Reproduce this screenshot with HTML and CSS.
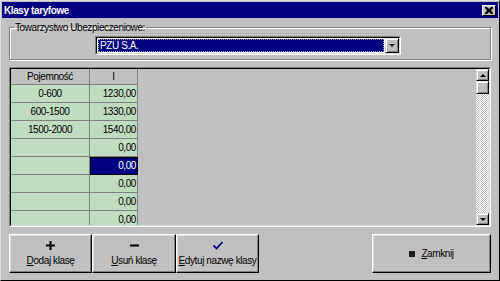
FILE: index.html
```html
<!DOCTYPE html>
<html lang="pl">
<head>
    <meta charset="UTF-8">
    <title>Klasy taryfowe</title>
    <link rel="stylesheet" href="styles.css">
</head>
<body>
    <div class="window">
        <div class="titlebar">
            <span class="title">Klasy taryfowe</span>
            <div class="title-close">
                <svg width="8" height="7" viewBox="0 0 8 7"><path d="M0 0h2l2 2 2-2h2v1L6 3.5 8 6v1H6L4 5 2 7H0V6l2-2.5L0 1z" fill="#000"/></svg>
            </div>
        </div>

        <div class="content">
            <fieldset class="group">
                <legend>Towarzystwo Ubezpieczeniowe:</legend>
                <div class="combo">
                    <div class="combo-inner">
                        <div class="combo-value"><span>PZU S.A.</span></div>
                        <div class="arrow-btn combo-btn"><span class="tri-down"></span></div>
                    </div>
                </div>
            </fieldset>

            <div class="grid">
                <div class="grid-inner">
                    <div class="grid-cells">
                        <table>
                            <tr class="head"><td>Pojemność</td><td>I</td></tr>
                            <tr><td>0-600</td><td class="num">1230,00</td></tr>
                            <tr><td>600-1500</td><td class="num">1330,00</td></tr>
                            <tr><td>1500-2000</td><td class="num">1540,00</td></tr>
                            <tr><td></td><td class="num">0,00</td></tr>
                            <tr><td></td><td class="num selected">0,00</td></tr>
                            <tr><td></td><td class="num">0,00</td></tr>
                            <tr><td></td><td class="num">0,00</td></tr>
                            <tr><td></td><td class="num">0,00</td></tr>
                        </table>
                    </div>
                    <div class="scrollbar">
                        <div class="arrow-btn scroll-btn"><span class="tri-up"></span></div>
                        <div class="thumb"></div>
                        <div class="track"></div>
                        <div class="arrow-btn scroll-btn"><span class="tri-down"></span></div>
                    </div>
                </div>
            </div>

            <div class="buttons">
                <div class="btn-group">
                    <button class="btn">
                        <svg width="9" height="9" viewBox="0 0 9 9"><path d="M3.5 0h2v3.5H9v2H5.5V9h-2V5.5H0v-2h3.5z" fill="#000"/></svg>
                        <span><u>D</u>odaj klasę</span>
                    </button>
                    <button class="btn">
                        <svg width="9" height="9" viewBox="0 0 9 9"><path d="M0 3.5h9v2H0z" fill="#000"/></svg>
                        <span><u>U</u>suń klasę</span>
                    </button>
                    <button class="btn">
                        <svg width="10" height="9" viewBox="0 0 10 9"><path d="M0.5 4.5l3 3 6-6.5" stroke="#000080" stroke-width="1.8" fill="none"/></svg>
                        <span><u>E</u>dytuj nazwę klasy</span>
                    </button>
                </div>
                <button class="btn btn-close">
                    <span class="square"></span>
                    <span><u>Z</u>amknij</span>
                </button>
            </div>
        </div>
    </div>
</body>
</html>
```

FILE: styles.css
```css
body {
    margin: 0;
    background: #c0c0c0;
    font-family: "Liberation Sans", Arial, sans-serif;
    font-size: 10px;
    letter-spacing: -0.4px;
    color: #000;
}

.window {
    width: 500px;
    height: 281px;
    box-sizing: border-box;
    border: 1px solid;
    border-color: #dfdfdf #000 #000 #dfdfdf;
    padding: 1px;
    background: #c0c0c0;
    display: flex;
    flex-direction: column;
}

.titlebar {
    height: 16px;
    background: #000080;
    color: #fff;
    display: flex;
    align-items: center;
    justify-content: space-between;
    padding: 0 2px 0 2px;
}

.title {
    font-weight: bold;
    font-size: 10px;
}

.title-close {
    width: 12px;
    height: 9px;
    background: #c0c0c0;
    border: 1px solid;
    border-color: #fff #000 #000 #fff;
    display: flex;
    align-items: center;
    justify-content: center;
}

.content {
    flex: 1;
    display: flex;
    flex-direction: column;
    padding: 3px 7px 0;
}

.group {
    margin: 0;
    padding: 2px 0 4px 0;
    border: 1px solid #808080;
    box-shadow: inset 1px 1px 0 #fff, 1px 1px 0 #fff;
}

.group legend {
    padding: 0 1px;
    margin-left: 4px;
    line-height: 13px;
}

.combo {
    width: 304px;
    margin-left: 85px;
    border: 1px solid;
    border-color: #808080 #fff #fff #808080;
}

.combo-inner {
    display: flex;
    height: 15px;
    border: 1px solid;
    border-color: #000 #dfdfdf #dfdfdf #000;
    background: #fff;
}

.combo-value {
    flex: 1;
    margin: 1px;
    background: #000080;
    color: #fff;
    border: 1px dotted #a0a0c0;
    display: flex;
    align-items: center;
    padding-left: 1px;
}

.arrow-btn {
    background: #c0c0c0;
    border: 1px solid;
    border-color: #dfdfdf #000 #000 #dfdfdf;
    box-shadow: inset 1px 1px 0 #fff, inset -1px -1px 0 #808080;
    display: flex;
    align-items: center;
    justify-content: center;
    box-sizing: border-box;
}

.combo-btn {
    width: 14px;
}

.tri-down {
    border-left: 3px solid transparent;
    border-right: 3px solid transparent;
    border-top: 3px solid #000;
}

.tri-up {
    border-left: 3px solid transparent;
    border-right: 3px solid transparent;
    border-bottom: 3px solid #000;
}

.grid {
    margin-top: 7px;
    height: 160px;
    box-sizing: border-box;
    border: 1px solid;
    border-color: #808080 #fff #fff #808080;
}

.grid-inner {
    height: 100%;
    box-sizing: border-box;
    border: 1px solid;
    border-color: #000 #dfdfdf #dfdfdf #000;
    display: flex;
}

.grid-cells {
    flex: 1;
    overflow: hidden;
}

table {
    border-collapse: separate;
    border-spacing: 0;
}

td {
    padding: 0 2px;
    border-right: 1px solid #808080;
    border-bottom: 1px solid #808080;
    background: #c0dcc0;
    text-align: center;
    box-sizing: border-box;
    height: 18px;
    white-space: nowrap;
}

td:first-child {
    width: 79px;
}

td:last-child {
    width: 48px;
}

.head td {
    height: 16px;
    background: #c0c0c0;
}

.num {
    text-align: right;
    padding-right: 1px;
}

.selected {
    background: #000080;
    color: #fff;
    outline: 1px solid #000;
    outline-offset: -1px;
}

.scrollbar {
    width: 13px;
    display: flex;
    flex-direction: column;
}

.scroll-btn {
    height: 12px;
}

.thumb {
    height: 13px;
    box-sizing: border-box;
    background: #c0c0c0;
    border: 1px solid;
    border-color: #dfdfdf #000 #000 #dfdfdf;
    box-shadow: inset 1px 1px 0 #fff, inset -1px -1px 0 #808080;
}

.track {
    flex: 1;
    background: repeating-conic-gradient(#fff 0 25%, #c0c0c0 0 50%) 0 0 / 2px 2px;
}

.buttons {
    margin-top: 7px;
    display: flex;
    justify-content: space-between;
}

.btn-group {
    display: flex;
}

.btn {
    width: 83px;
    height: 39px;
    padding: 0;
    font: inherit;
    letter-spacing: inherit;
    white-space: nowrap;
    color: #000;
    background: #c0c0c0;
    border: 1px solid;
    border-color: #fff #000 #000 #fff;
    box-shadow: inset -1px -1px 0 #808080, inset 1px 1px 0 #dfdfdf;
    display: flex;
    flex-direction: column;
    align-items: center;
    justify-content: center;
    gap: 5px;
}

.btn-group .btn:nth-child(2) {
    width: 84px;
}

.btn-close {
    width: 119px;
    flex-direction: row;
    gap: 6px;
}

.square {
    width: 6px;
    height: 6px;
    background: #202020;
}
```
